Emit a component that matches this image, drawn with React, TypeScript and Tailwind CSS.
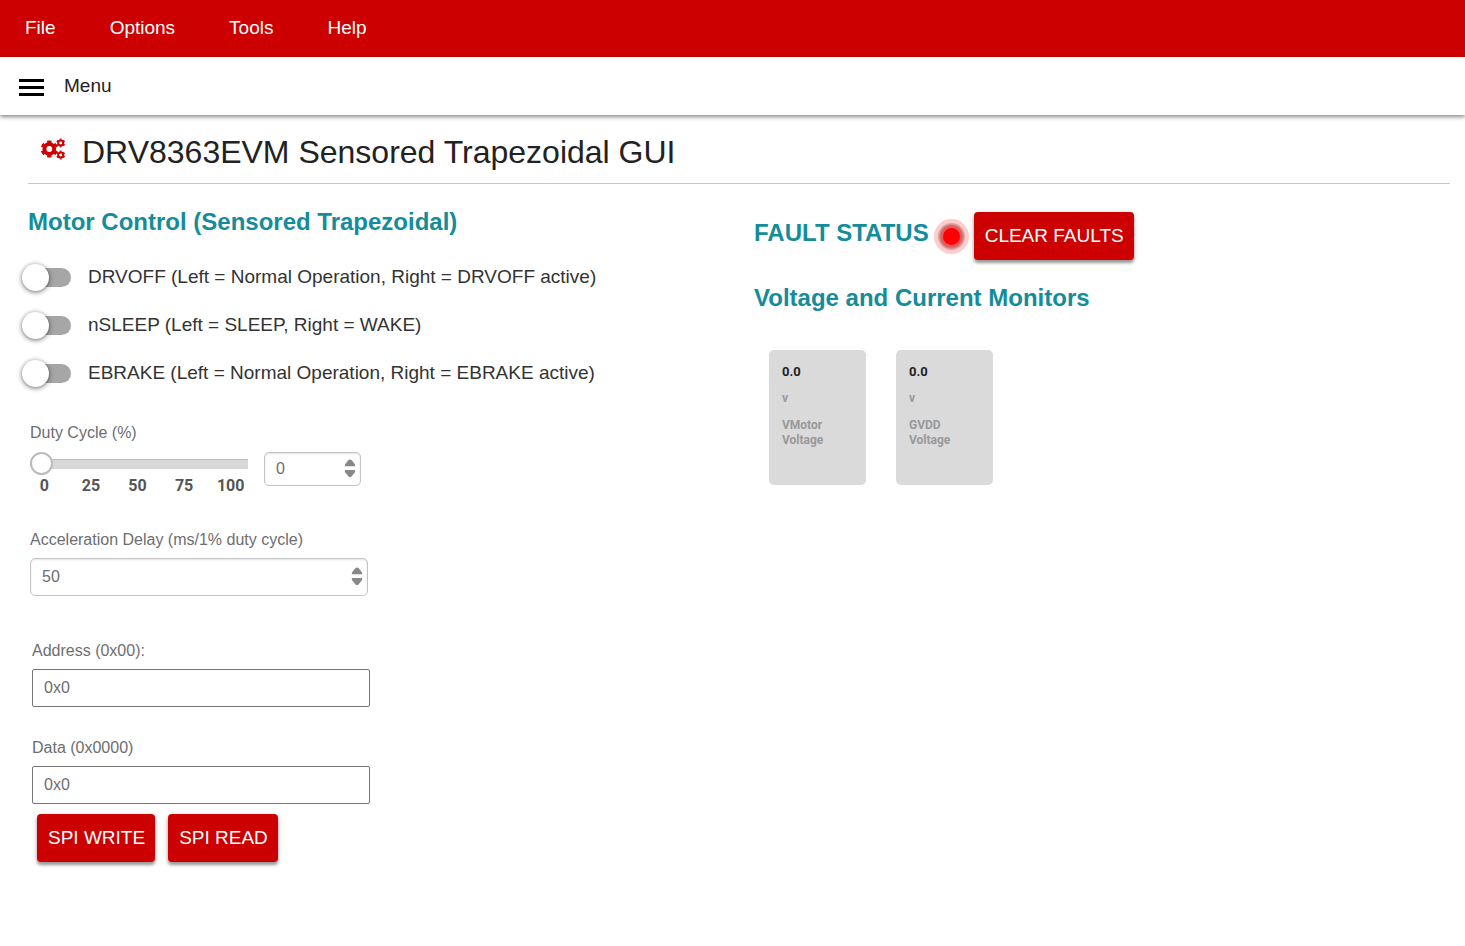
import React, { useState } from 'react';

const menuItems = ['File', 'Options', 'Tools', 'Help'];

const switches = [
  { id: 'drvoff', label: 'DRVOFF (Left = Normal Operation, Right = DRVOFF active)' },
  { id: 'nsleep', label: 'nSLEEP (Left = SLEEP, Right = WAKE)' },
  { id: 'ebrake', label: 'EBRAKE (Left = Normal Operation, Right = EBRAKE active)' },
];

const ticks = [0, 25, 50, 75, 100];

const monitors = [
  { value: '0.0', unit: 'v', name: 'VMotor Voltage' },
  { value: '0.0', unit: 'v', name: 'GVDD Voltage' },
];

const Button: React.FC<{ children: React.ReactNode; className?: string }> = ({ children, className = '' }) => (
  <button
    type="button"
    className={`h-12 pl-[11px] pr-[10px] rounded-[4px] bg-[#cc0000] text-white text-[19px] whitespace-nowrap shadow-[0_3px_3px_rgba(0,0,0,0.35),0_1px_6px_rgba(0,0,0,0.15)] hover:bg-[#b30000] ${className}`}
  >
    {children}
  </button>
);

const SectionTitle: React.FC<{ children: React.ReactNode }> = ({ children }) => (
  <h2 className="text-2xl leading-8 font-bold text-[#158c9b] whitespace-nowrap">{children}</h2>
);

// ring plus six teeth drawn as a dashed circle
const Gear: React.FC<{ cx: number; cy: number; r: number }> = ({ cx, cy, r }) => (
  <g fill="none" stroke="#cc0000">
    <circle cx={cx} cy={cy} r={r * 0.57} strokeWidth={r * 0.46} />
    <circle cx={cx} cy={cy} r={r * 0.87} strokeWidth={r * 0.26} pathLength={12} strokeDasharray="1.1 0.9" strokeDashoffset={-0.45} />
  </g>
);

const GearsIcon: React.FC = () => (
  <svg className="mb-[5px]" width="25" height="22" viewBox="0 0 25 22" aria-hidden="true">
    <Gear cx={8.3} cy={11} r={8.6} />
    <Gear cx={19.7} cy={5} r={4.4} />
    <Gear cx={19.7} cy={17} r={4.4} />
  </svg>
);

const ToggleSwitch: React.FC<{ id: string; label: string }> = ({ id, label }) => (
  <div className="flex items-center h-12">
    <input
      id={id}
      type="checkbox"
      role="switch"
      className="relative appearance-none shrink-0 w-[43px] h-[19px] rounded-full bg-[#a6a6a6] before:absolute before:-top-1 before:-left-[6px] before:size-[27px] before:rounded-full before:bg-white before:shadow-[0_1px_5px_rgba(0,0,0,0.6)] before:transition-transform checked:bg-[#e06666] checked:before:translate-x-6"
    />
    <label htmlFor={id} className="pl-[17px] text-[19px] leading-6 text-[#333333]">{label}</label>
  </div>
);

type NumberBoxProps = {
  id: string;
  value: number;
  onChange: (value: number) => void;
  className: string;
  label?: string;
};

const NumberBox: React.FC<NumberBoxProps> = ({ id, value, onChange, className, label }) => (
  <div className={`relative ${className}`}>
    <input
      id={id}
      type="number"
      aria-label={label}
      value={value}
      onChange={(e) => onChange(Number(e.target.value))}
      className="w-full h-full pl-[11px] pr-6 rounded-[5px] border border-[#c4c4c4] bg-white text-base text-[#6d6e71] shadow-[inset_0_1px_2px_rgba(0,0,0,0.12)] [appearance:textfield] [&::-webkit-inner-spin-button]:appearance-none"
    />
    <svg className="absolute right-[5px] top-1/2 -translate-y-1/2 pointer-events-none" width="12" height="20" viewBox="0 0 12 20" fill="#888888">
      <path d="M4.5 1Q6 -0.2 7.5 1L10.7 5Q11.4 6 11.1 7.2H0.9Q0.6 6 1.3 5Z" />
      <path d="M4.5 17.6Q6 18.8 7.5 17.6L10.7 13.6Q11.4 12.6 11.1 11H0.9Q0.6 12.6 1.3 13.6Z" />
    </svg>
  </div>
);

const HexField: React.FC<{ id: string; label: string }> = ({ id, label }) => (
  <div>
    <label htmlFor={id} className="block text-base leading-6 text-[#6d6e71]">{label}</label>
    <input
      id={id}
      type="text"
      defaultValue="0x0"
      className="block mt-[6px] w-full h-[38px] px-[11px] rounded-[2px] border border-[#767676] bg-white text-base text-[#6d6e71]"
    />
  </div>
);

const App: React.FC = () => {
  const [duty, setDuty] = useState(0);
  const [delay, setDelay] = useState(50);

  return (
    <div className="min-h-screen bg-white text-[#222222] font-['Liberation_Sans',Arial,sans-serif]">
      {/* Menu bar */}
      <nav className="flex items-center h-[57px] pl-[25px] gap-[54px] bg-[#cc0000] text-white text-[19px]">
        {menuItems.map((item) => (
          <button key={item} type="button">{item}</button>
        ))}
      </nav>

      <header className="relative flex items-center h-[58px] pl-[19px] shadow-[0_2px_4px_rgba(0,0,0,0.45)]">
        <button type="button" className="flex items-center gap-5 text-[19px]">
          <svg className="mt-[3px]" width="25" height="17" viewBox="0 0 25 17" fill="#000000">
            <rect width="25" height="3" />
            <rect y="7" width="25" height="3" />
            <rect y="14" width="25" height="3" />
          </svg>
          <span>Menu</span>
        </button>
      </header>

      <main className="pl-7 pr-[15px] pb-8">
        <div className="flex items-center h-[69px] pl-[13px] pt-[5px] border-b border-[#c8c8c8]">
          <GearsIcon />
          <h1 className="ml-4 text-[32px] leading-10">DRV8363EVM Sensored Trapezoidal GUI</h1>
        </div>

        <div className="grid grid-cols-2">
          {/* Motor control */}
          <section className="pt-[22px]">
            <SectionTitle>Motor Control (Sensored Trapezoidal)</SectionTitle>

            <div className="mt-[15px]">
              {switches.map((s) => (
                <ToggleSwitch key={s.id} id={s.id} label={s.label} />
              ))}
            </div>

            <div className="pl-[2px] pt-6">
              <label htmlFor="duty" className="block text-base leading-6 text-[#6d6e71]">Duty Cycle (%)</label>
              <div className="flex items-start gap-4 mt-[7px]">
                <div className="w-[218px]">
                  <input
                    id="duty"
                    type="range"
                    min={0}
                    max={100}
                    value={duty}
                    onChange={(e) => setDuty(Number(e.target.value))}
                    className="block w-full h-[23px] appearance-none bg-transparent [&::-webkit-slider-runnable-track]:h-[10px] [&::-webkit-slider-runnable-track]:rounded-l-full [&::-webkit-slider-runnable-track]:rounded-tr-[4px] [&::-webkit-slider-runnable-track]:bg-[#d8d8d8] [&::-webkit-slider-runnable-track]:shadow-[inset_0_1px_0_#bfbfbf] [&::-webkit-slider-thumb]:appearance-none [&::-webkit-slider-thumb]:size-[23px] [&::-webkit-slider-thumb]:-mt-[7px] [&::-webkit-slider-thumb]:rounded-full [&::-webkit-slider-thumb]:border-2 [&::-webkit-slider-thumb]:border-[#bbbbbb] [&::-webkit-slider-thumb]:bg-white"
                  />
                  <div className="grid grid-cols-5 -ml-[9px] -mr-[6px] text-center text-base leading-[22px] font-bold text-[#555555] font-[Roboto,sans-serif]">
                    {ticks.map((t) => (
                      <span key={t}>{t}</span>
                    ))}
                  </div>
                </div>
                <NumberBox id="duty-value" label="Duty Cycle" value={duty} onChange={setDuty} className="w-[97px] h-[34px]" />
              </div>
            </div>

            <div className="pl-[2px] pt-[31px]">
              <label htmlFor="delay" className="block text-base leading-6 text-[#6d6e71]">
                Acceleration Delay (ms/1% duty cycle)
              </label>
              <NumberBox id="delay" value={delay} onChange={setDelay} className="mt-[6px] w-[338px] h-[38px]" />
            </div>

            <div className="flex flex-col gap-[29px] w-[342px] pl-1 pt-[43px]">
              <HexField id="address" label="Address (0x00):" />
              <HexField id="data" label="Data (0x0000)" />
            </div>

            <div className="flex gap-[13px] pl-[9px] pt-[10px]">
              <Button>SPI WRITE</Button>
              <Button>SPI READ</Button>
            </div>
          </section>

          {/* Faults and monitors */}
          <section className="pl-[15px] pt-7">
            <div className="flex items-start">
              <div className="pt-[5px]">
                <SectionTitle>FAULT STATUS</SectionTitle>
              </div>
              <svg className="ml-[5px] mt-[7px]" width="35" height="35" viewBox="0 0 35 35" role="img" aria-label="Fault">
                <circle cx="17.5" cy="17.5" r="17.5" fill="#ffcccc" />
                <circle cx="17.5" cy="17.5" r="13.5" fill="#dfa3a3" />
                <circle cx="17.5" cy="17.5" r="12.2" fill="#c68585" />
                <circle cx="17.5" cy="17.5" r="11" fill="#e55a5a" />
                <circle cx="17.5" cy="17.5" r="8.5" fill="#ff0000" />
              </svg>
              <Button className="ml-[5px]">CLEAR FAULTS</Button>
            </div>

            <div className="pt-[22px]">
              <SectionTitle>Voltage and Current Monitors</SectionTitle>
            </div>

            <div className="flex gap-[30px] pl-[15px] pt-9 font-[Roboto,sans-serif] font-bold text-xs">
              {monitors.map((m) => (
                <div key={m.name} className="w-[97px] h-[135px] px-[13px] pt-[14px] rounded-[5px] bg-[#dadada] text-[#999999]">
                  <p className="text-[13px] leading-4 text-[#222222]">{m.value}</p>
                  <p className="mt-[10px] leading-4">{m.unit}</p>
                  <p className="mt-3 leading-[15px]">{m.name}</p>
                </div>
              ))}
            </div>
          </section>
        </div>
      </main>
    </div>
  );
};

export default App;
